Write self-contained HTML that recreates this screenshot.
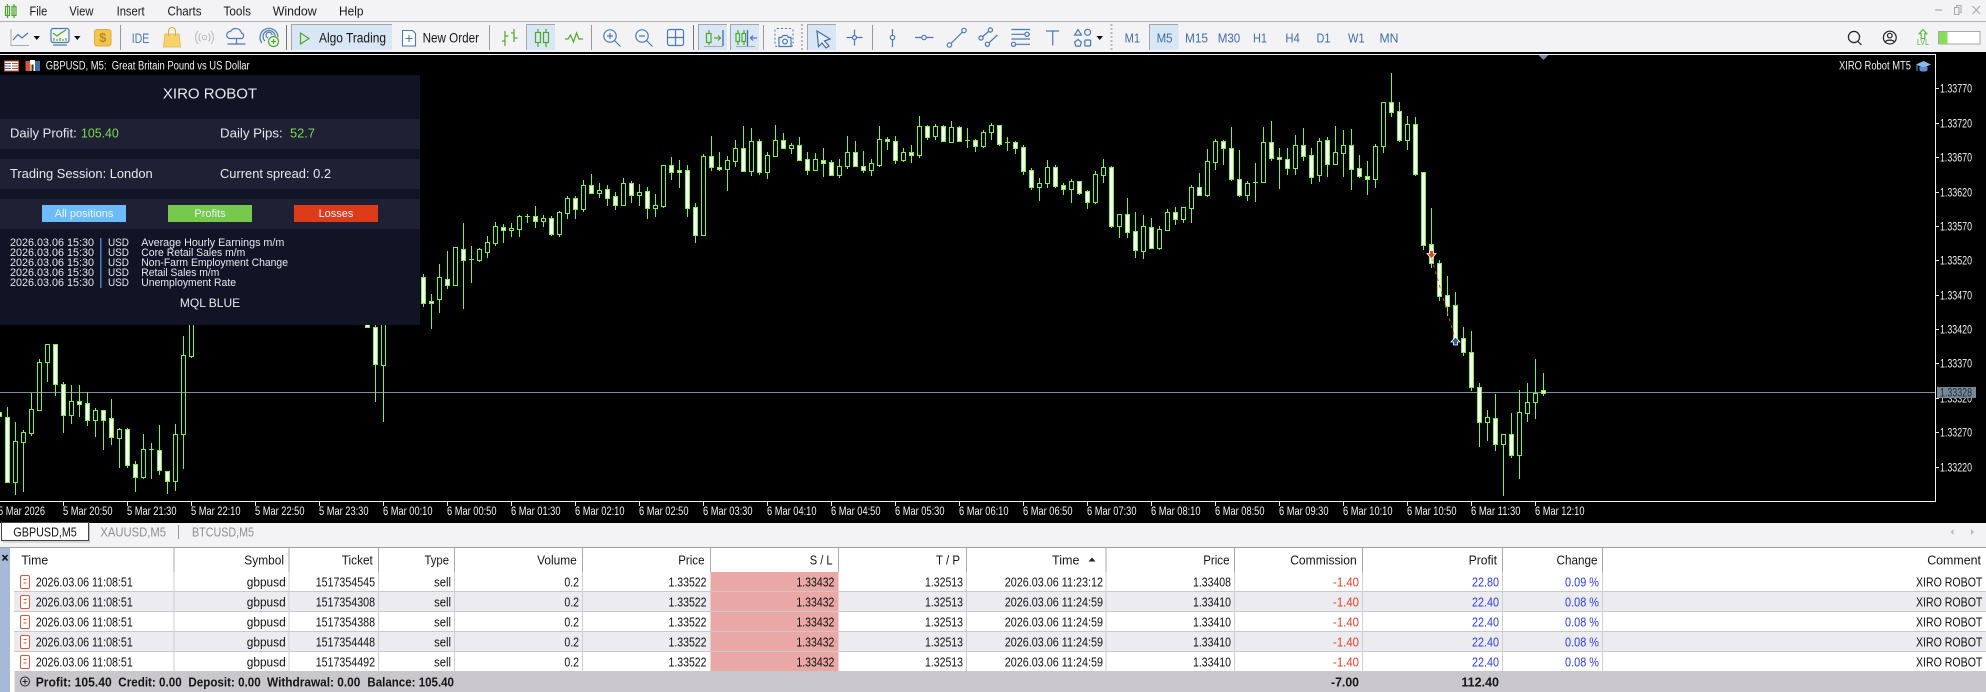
<!DOCTYPE html>
<html><head><meta charset="utf-8"><title>MetaTrader 5</title>
<style>
html,body{margin:0;padding:0;background:#f3f2f5;overflow:hidden}
svg{display:block;font-family:"Liberation Sans",Arial,sans-serif}
.m{font-size:13px;fill:#1a1a1a}
.tf{font-size:13px;fill:#3f6ea6}
.ax{font-size:11.5px;fill:#f2f2f2}
.hd{font-size:13px;fill:#151515;text-anchor:end}
.cell{font-size:13px;fill:#111;text-anchor:end}
.p{font-size:13px;fill:#e6e8f0}
.n{font-size:11px;fill:#e6e8f0}
.btn{font-size:11px;fill:#eef4fa;text-anchor:middle}
.bl{fill:none;stroke:#4a7ab5;stroke-width:1.2}
.gr{fill:none;stroke:#4ea82e;stroke-width:1.2}
</style></head><body>
<svg width="1986" height="692" viewBox="0 0 1986 692" xmlns="http://www.w3.org/2000/svg">
<rect width="1986" height="692" fill="#f3f2f5"/>
<!-- menu -->
<g class="gr"><path d="M7.5 4V18M14 4V18"/><rect x="5.5" y="6.5" width="4" height="9" /><rect x="12" y="6.5" width="4" height="9"/></g>
<text class="m" x="29.5" y="15.5" textLength="17.7" lengthAdjust="spacingAndGlyphs">File</text>
<text class="m" x="69.4" y="15.5" textLength="24" lengthAdjust="spacingAndGlyphs">View</text>
<text class="m" x="116.6" y="15.5" textLength="28" lengthAdjust="spacingAndGlyphs">Insert</text>
<text class="m" x="167.5" y="15.5" textLength="34" lengthAdjust="spacingAndGlyphs">Charts</text>
<text class="m" x="223.5" y="15.5" textLength="27.5" lengthAdjust="spacingAndGlyphs">Tools</text>
<text class="m" x="272.7" y="15.5" textLength="44" lengthAdjust="spacingAndGlyphs">Window</text>
<text class="m" x="339" y="15.5" textLength="24.5" lengthAdjust="spacingAndGlyphs">Help</text>
<rect x="0" y="21" width="1986" height="1" fill="#b0b0b0"/>
<path d="M1935 10h7" stroke="#a8a8a8" stroke-width="1.2"/>
<path d="M1954.5 7.5h4.5v7h-4.5zM1956.5 7.5v-2h4.5v7h-2" fill="none" stroke="#a8a8a8"/>
<path d="M1972.5 6l7.5 8M1980 6l-7.5 8" stroke="#a8a8a8" stroke-width="1.1"/>
<!-- toolbar separators -->
<g fill="#9a9a9a">
<rect x="120" y="25" width="1" height="25"/><rect x="286" y="25" width="1" height="25" fill="#777"/>
<rect x="489" y="25" width="1" height="25"/><rect x="591" y="25" width="1" height="25"/>
<rect x="693" y="25" width="1" height="25" fill="#777"/><rect x="763" y="25" width="1" height="25"/>
<rect x="872" y="25" width="1" height="25"/>
</g>
<path d="M802 24V50M1111.5 24V50" stroke="#b8b8b8" stroke-width="2" stroke-dasharray="2 2"/>
<!-- active buttons -->
<g fill="#d9e6f5" stroke="none">
<rect x="291" y="24" width="101" height="26"/><rect x="526" y="24" width="29" height="26"/>
<rect x="698" y="24" width="29" height="26"/><rect x="730" y="24" width="29" height="26"/>
<rect x="807" y="24" width="29" height="26"/><rect x="1149" y="24" width="29.5" height="26"/>
</g>
<g fill="none" stroke="#a6a6a6">
<path d="M291.5 50V24.5H392"/><path d="M526.5 50V24.5H555"/><path d="M698.5 50V24.5H727"/><path d="M730.5 50V24.5H759"/><path d="M807.5 50V24.5H836"/><path d="M1149.5 50V24.5H1178"/>
</g>
<!-- left group icons -->
<path d="M11 29V45.5H29" fill="none" stroke="#aaa"/><path d="M13 40L18 34.5L22 38L28 33" class="bl"/>
<path d="M33.5 36h6.5l-3.2 4zM74 36h6.5l-3.2 4zM1096.5 36h6.5l-3.2 4z" fill="#111"/>
<rect x="51" y="28.5" width="18" height="14" rx="2" class="bl"/><path d="M53 33l4 3 4-3 5-3" class="gr"/><path d="M54 41v-3M57 41v-2M60 41v-3M63 41v-2M66 41v-3" class="gr"/><path d="M53 45h14" class="bl"/>
<rect x="94.5" y="29.5" width="16.5" height="16.5" rx="2.5" fill="#f3c64f" stroke="#dcaf3c"/><text x="102.7" y="42" font-size="13" font-weight="bold" fill="#b58a22" text-anchor="middle">$</text>
<text x="131.7" y="43" font-size="13.5" fill="#4a7ab5" textLength="17.7" lengthAdjust="spacingAndGlyphs">IDE</text>
<path d="M165 34h14l1.5 13h-17z" fill="#f6d36a" stroke="#e0b648" stroke-width=".8"/><path d="M168.5 36v-5a3.5 3.5 0 0 1 7 0v5" fill="none" stroke="#d9ad3e" stroke-width="1.1"/>
<g fill="none" stroke="#bdbdbd" stroke-width="1.1"><circle cx="204.5" cy="37.5" r="2.2"/><path d="M200.5 33.5a6 6 0 0 0 0 8M208.5 33.5a6 6 0 0 1 0 8M198 31a10 10 0 0 0 0 13M211 31a10 10 0 0 1 0 13"/></g>
<path d="M230 38.5a3.5 3.5 0 0 1 .5-7 6 6 0 0 1 11 1.5 3 3 0 0 1 .5 5.5zM236.5 38.5v5M227.5 44h18" class="bl"/>
<g class="bl"><path d="M262 43a9 9 0 1 1 16-6M265 41a6 6 0 1 1 10-5M268 38a3 3 0 1 1 4-3"/></g>
<circle cx="273.5" cy="41.5" r="5" fill="#f3f2f5" stroke="#4ea82e" stroke-width="1.2"/><path d="M271 41.5h5M273.5 39v5" stroke="#4ea82e" stroke-width="1.2"/>
<path d="M300.5 33l8.5 5.5-8.5 5.5z" fill="none" stroke="#4ea82e" stroke-width="1.2"/>
<text x="319" y="42.5" font-size="13.5" fill="#151515" textLength="67" lengthAdjust="spacingAndGlyphs">Algo Trading</text>
<path d="M402.5 30.5h10l3 3v12.5h-13z" fill="#fff" stroke="#4a7ab5" stroke-width="1.1"/><path d="M409 35v7M405.5 38.5h7" stroke="#4a7ab5" stroke-width="1.1"/>
<text x="422.6" y="42.5" font-size="13.5" fill="#151515" textLength="56.4" lengthAdjust="spacingAndGlyphs">New Order</text>
<path d="M505 31v15M505 41h-3M505 36h3.5M514 29v13M514 33h-3M514 38h3.5" class="gr"/>
<g class="gr"><path d="M538 29v18M546 29v18"/><rect x="535.5" y="32.5" width="5" height="10" fill="#d9e6f5"/><rect x="543.5" y="32.5" width="5" height="10" fill="#d9e6f5"/></g>
<path d="M565 39h3l2.5-4 3 7 3-9 2.5 6h4" class="gr"/>
<g class="bl"><circle cx="610" cy="36" r="6.2"/><path d="M607 36h6M610 33v6M614.5 40.5l6 6"/><circle cx="642" cy="36" r="6.2"/><path d="M639 36h6M646.5 40.5l6 6"/>
<rect x="667.5" y="29.5" width="16" height="16" rx="2"/><path d="M667.5 37.5h16M675.5 29.5v16"/></g>
<g class="gr"><path d="M709 30v15"/><rect x="706.5" y="33.5" width="4.5" height="9" fill="#d9e6f5"/><path d="M714 38h6M718 35.5l2.5 2.5-2.5 2.5"/></g>
<path d="M723 30v16" stroke="#3f6ea6" stroke-width="1.3"/><path d="M704 46.5h19M736 46.5h19" stroke="#aaa"/>
<g class="gr"><path d="M738 30v15M744 30v15"/><rect x="736" y="33.5" width="3.5" height="8" fill="#d9e6f5"/><rect x="742" y="33.5" width="3.5" height="8" fill="#d9e6f5"/></g>
<path d="M747.5 30v16" stroke="#3f6ea6" stroke-width="1.3"/><path d="M751 38h6M753 35.5l-2.5 2.5 2.5 2.5" class="bl"/>
<rect x="775" y="28.5" width="18" height="18" rx="2" fill="none" stroke="#4a7ab5" stroke-dasharray="2 2"/><path d="M779 37.5h2.5l1.5-2h4l1.5 2h2.5v9h-12z" fill="#f3f2f5" stroke="#4a7ab5" stroke-width="1.2"/><circle cx="785" cy="41.5" r="2.4" class="bl"/>
<path d="M817 31l13 8-5.5 2 4.5 5-3 2-4-5-3.5 3.5z" fill="#e8f0f9" stroke="#3f6ea6" stroke-width="1.2"/>
<g class="bl"><path d="M846.5 37.5h16M854.5 29.5v16"/><circle cx="854.5" cy="37.5" r="2" fill="#f3f2f5"/><path d="M892.5 29v18"/><circle cx="892.5" cy="37.5" r="2.2" fill="#f3f2f5"/><path d="M915 37.5h18.5"/><circle cx="924" cy="37.5" r="2.2" fill="#f3f2f5"/>
<path d="M949.5 45L964 30.5"/><circle cx="949.5" cy="45" r="2.2" fill="#f3f2f5"/><circle cx="964" cy="30.5" r="2.2" fill="#f3f2f5"/>
<path d="M981 38l9.4-8M987.4 44.3l10-9.3"/><circle cx="981" cy="38" r="2.1" fill="#f3f2f5"/><circle cx="990.4" cy="30" r="2.1" fill="#f3f2f5"/><circle cx="987.4" cy="44.3" r="2.1" fill="#f3f2f5"/>
<path d="M1011.4 29.5h18.6M1011.4 34.3h18.6M1011.4 39h18.6M1011.4 44.3h18.6"/><circle cx="1027" cy="34.3" r="2.1" fill="#f3f2f5"/><circle cx="1013.5" cy="44.3" r="2.1" fill="#f3f2f5"/>
<path d="M1046 31h13M1052.7 31v14.5"/>
<path d="M1078 29.5l3.4 5.5h-6.8z"/><circle cx="1087.6" cy="32.3" r="3"/><path d="M1078 39.5l3.4 2.6-1.2 4h-4.4l-1.2-4z"/><rect x="1084.8" y="40" width="5.8" height="6" rx="1"/></g>
<!-- timeframes -->
<text class="tf" x="1124.6" y="42.5" textLength="15.4" lengthAdjust="spacingAndGlyphs">M1</text>
<text class="tf" x="1156.6" y="42.5" textLength="16" lengthAdjust="spacingAndGlyphs">M5</text>
<text class="tf" x="1185" y="42.5" textLength="23" lengthAdjust="spacingAndGlyphs">M15</text>
<text class="tf" x="1217.7" y="42.5" textLength="22.5" lengthAdjust="spacingAndGlyphs">M30</text>
<text class="tf" x="1253" y="42.5" textLength="14" lengthAdjust="spacingAndGlyphs">H1</text>
<text class="tf" x="1285.4" y="42.5" textLength="14.4" lengthAdjust="spacingAndGlyphs">H4</text>
<text class="tf" x="1316.5" y="42.5" textLength="14" lengthAdjust="spacingAndGlyphs">D1</text>
<text class="tf" x="1348" y="42.5" textLength="16.6" lengthAdjust="spacingAndGlyphs">W1</text>
<text class="tf" x="1379.5" y="42.5" textLength="19" lengthAdjust="spacingAndGlyphs">MN</text>
<!-- right tools -->
<g fill="none" stroke="#222" stroke-width="1.2"><circle cx="1854" cy="37" r="5.6"/><path d="M1858 41.5l3.5 3.5"/><circle cx="1889.8" cy="37.6" r="6.4"/><circle cx="1889.8" cy="35.6" r="2.3"/><path d="M1885.3 42c1-2.5 8-2.5 9 0"/></g>
<path d="M1923 29.5l3.8 4.2h-2v4.8h-3.6v-4.8h-2z" fill="none" stroke="#58b436" stroke-width="1.1"/>
<text x="1917" y="45" font-size="8.5" fill="#58b436" textLength="12" lengthAdjust="spacingAndGlyphs">LVL</text>
<rect x="1938.5" y="31.5" width="41.5" height="12.5" fill="#fff" stroke="#a8a8a8"/><rect x="1939" y="32" width="8.5" height="12" fill="#88dc5a"/>
<!-- chart -->
<rect x="0" y="52" width="1986" height="471" fill="#000"/>
<path d="M0 54.5H1935.5V501.5H0" fill="none" stroke="#f2f2f2"/>
<path d="M1538.5 55h10l-5 5z" fill="#778899"/>
<!-- chart header icons -->
<rect x="4.5" y="61" width="14" height="10" fill="#fff" stroke="#d04a30"/><path d="M5 63.5h6M5 66h6M5 68.5h6" stroke="#3f6ea6"/><path d="M12 63.5h6M12 66h6M12 68.5h6" stroke="#d04a30"/>
<rect x="25.5" y="61" width="14.5" height="10" fill="#fff"/><rect x="25.5" y="61" width="5" height="10" fill="#d8573a"/><rect x="35" y="61" width="5" height="10" fill="#3f6ea6"/><rect x="30" y="60" width="5" height="4" fill="#fff"/><rect x="31.5" y="64.5" width="2" height="6.5" fill="#333"/>
<text class="ax" x="45.7" y="69.5" textLength="204" lengthAdjust="spacingAndGlyphs">GBPUSD, M5:&#160; Great Britain Pound vs US Dollar</text>
<text class="ax" x="1839" y="69.5" textLength="72" lengthAdjust="spacingAndGlyphs">XIRO Robot MT5</text>
<path d="M1916 64.5l7.5-3.5 7.5 3.5-7.5 3.5z" fill="#8fb8e8"/><path d="M1919.5 67v3.5c2 1.5 6 1.5 8 0V67" fill="#5d8fd0"/><path d="M1917 65v6" stroke="#5d8fd0"/>
<rect x="0" y="392" width="1935" height="1" fill="#7f8fa3"/>
<g id="c"></g>
<path d="M1431.5 258L1455.5 340" stroke="#d8552a" stroke-dasharray="3 4" fill="none"/>
<path d="M1429.5 250.5h4v3h2.5l-4.5 5.5-4.5-5.5h2.5z" fill="#d0502a" stroke="#fff" stroke-width=".8"/>
<path d="M1455.5 337l4.5 5h-2.5v3h-4v-3h-2.5z" fill="#2c5ca8" stroke="#fff" stroke-width=".8"/>
<!-- price axis -->
<g fill="#e8e8e8"><rect x="1936" y="88" width="3" height="1"/><rect x="1936" y="123" width="3" height="1"/><rect x="1936" y="157" width="3" height="1"/><rect x="1936" y="192" width="3" height="1"/><rect x="1936" y="226" width="3" height="1"/><rect x="1936" y="260" width="3" height="1"/><rect x="1936" y="295" width="3" height="1"/><rect x="1936" y="329" width="3" height="1"/><rect x="1936" y="363" width="3" height="1"/><rect x="1936" y="398" width="3" height="1"/><rect x="1936" y="432" width="3" height="1"/><rect x="1936" y="467" width="3" height="1"/></g>
<text class="ax" x="1940" y="92.7" textLength="32" lengthAdjust="spacingAndGlyphs">1.33770</text>
<text class="ax" x="1940" y="127.3" textLength="32" lengthAdjust="spacingAndGlyphs">1.33720</text>
<text class="ax" x="1940" y="161.7" textLength="32" lengthAdjust="spacingAndGlyphs">1.33670</text>
<text class="ax" x="1940" y="196.7" textLength="32" lengthAdjust="spacingAndGlyphs">1.33620</text>
<text class="ax" x="1940" y="230.7" textLength="32" lengthAdjust="spacingAndGlyphs">1.33570</text>
<text class="ax" x="1940" y="264.7" textLength="32" lengthAdjust="spacingAndGlyphs">1.33520</text>
<text class="ax" x="1940" y="299.3" textLength="32" lengthAdjust="spacingAndGlyphs">1.33470</text>
<text class="ax" x="1940" y="333.3" textLength="32" lengthAdjust="spacingAndGlyphs">1.33420</text>
<text class="ax" x="1940" y="367.3" textLength="32" lengthAdjust="spacingAndGlyphs">1.33370</text>
<text class="ax" x="1940" y="402.7" textLength="32" lengthAdjust="spacingAndGlyphs">1.33320</text>
<text class="ax" x="1940" y="436.3" textLength="32" lengthAdjust="spacingAndGlyphs">1.33270</text>
<text class="ax" x="1940" y="471.3" textLength="32" lengthAdjust="spacingAndGlyphs">1.33220</text>
<rect x="1937" y="387" width="39" height="11" fill="#778899"/>
<text x="1940" y="396.5" font-size="11.5" fill="#1d2a38" textLength="32" lengthAdjust="spacingAndGlyphs">1.33328</text>
<!-- time axis -->
<path d="M63.5 502v4M127.5 502v4M191.5 502v4M255.5 502v4M319.5 502v4M383.5 502v4M447.5 502v4M511.5 502v4M575.5 502v4M639.5 502v4M703.5 502v4M767.5 502v4M831.5 502v4M895.5 502v4M959.5 502v4M1023.5 502v4M1087.5 502v4M1151.5 502v4M1215.5 502v4M1279.5 502v4M1343.5 502v4M1407.5 502v4M1471.5 502v4M1535.5 502v4" stroke="#e8e8e8"/>
<text class="ax" x="-2" y="515" textLength="47" lengthAdjust="spacingAndGlyphs">5 Mar 2026</text>
<text class="ax" x="63" y="515" textLength="49.5" lengthAdjust="spacingAndGlyphs">5 Mar 20:50</text>
<text class="ax" x="127" y="515" textLength="49.5" lengthAdjust="spacingAndGlyphs">5 Mar 21:30</text>
<text class="ax" x="191" y="515" textLength="49.5" lengthAdjust="spacingAndGlyphs">5 Mar 22:10</text>
<text class="ax" x="255" y="515" textLength="49.5" lengthAdjust="spacingAndGlyphs">5 Mar 22:50</text>
<text class="ax" x="319" y="515" textLength="49.5" lengthAdjust="spacingAndGlyphs">5 Mar 23:30</text>
<text class="ax" x="383" y="515" textLength="49.5" lengthAdjust="spacingAndGlyphs">6 Mar 00:10</text>
<text class="ax" x="447" y="515" textLength="49.5" lengthAdjust="spacingAndGlyphs">6 Mar 00:50</text>
<text class="ax" x="511" y="515" textLength="49.5" lengthAdjust="spacingAndGlyphs">6 Mar 01:30</text>
<text class="ax" x="575" y="515" textLength="49.5" lengthAdjust="spacingAndGlyphs">6 Mar 02:10</text>
<text class="ax" x="639" y="515" textLength="49.5" lengthAdjust="spacingAndGlyphs">6 Mar 02:50</text>
<text class="ax" x="703" y="515" textLength="49.5" lengthAdjust="spacingAndGlyphs">6 Mar 03:30</text>
<text class="ax" x="767" y="515" textLength="49.5" lengthAdjust="spacingAndGlyphs">6 Mar 04:10</text>
<text class="ax" x="831" y="515" textLength="49.5" lengthAdjust="spacingAndGlyphs">6 Mar 04:50</text>
<text class="ax" x="895" y="515" textLength="49.5" lengthAdjust="spacingAndGlyphs">6 Mar 05:30</text>
<text class="ax" x="959" y="515" textLength="49.5" lengthAdjust="spacingAndGlyphs">6 Mar 06:10</text>
<text class="ax" x="1023" y="515" textLength="49.5" lengthAdjust="spacingAndGlyphs">6 Mar 06:50</text>
<text class="ax" x="1087" y="515" textLength="49.5" lengthAdjust="spacingAndGlyphs">6 Mar 07:30</text>
<text class="ax" x="1151" y="515" textLength="49.5" lengthAdjust="spacingAndGlyphs">6 Mar 08:10</text>
<text class="ax" x="1215" y="515" textLength="49.5" lengthAdjust="spacingAndGlyphs">6 Mar 08:50</text>
<text class="ax" x="1279" y="515" textLength="49.5" lengthAdjust="spacingAndGlyphs">6 Mar 09:30</text>
<text class="ax" x="1343" y="515" textLength="49.5" lengthAdjust="spacingAndGlyphs">6 Mar 10:10</text>
<text class="ax" x="1407" y="515" textLength="49.5" lengthAdjust="spacingAndGlyphs">6 Mar 10:50</text>
<text class="ax" x="1471" y="515" textLength="49.5" lengthAdjust="spacingAndGlyphs">6 Mar 11:30</text>
<text class="ax" x="1535" y="515" textLength="49.5" lengthAdjust="spacingAndGlyphs">6 Mar 12:10</text>
<!-- robot panel -->
<rect x="0" y="75" width="420" height="250" fill="#111424"/>
<rect x="0" y="119" width="420" height="30" fill="#1f2033"/>
<rect x="0" y="159" width="420" height="30" fill="#1f2033"/>
<rect x="0" y="199" width="420" height="30" fill="#1f2033"/>
<text x="210" y="98.5" font-size="15" fill="#e6e8f0" text-anchor="middle">XIRO ROBOT</text>
<text class="p" x="10" y="137.5" textLength="66.7" lengthAdjust="spacingAndGlyphs">Daily Profit:</text><text x="81" y="137.5" font-size="13" fill="#7bd855" textLength="37.7" lengthAdjust="spacingAndGlyphs">105.40</text>
<text class="p" x="220" y="137.5" textLength="62.7" lengthAdjust="spacingAndGlyphs">Daily Pips:</text><text x="290" y="137.5" font-size="13" fill="#7bd855" textLength="25" lengthAdjust="spacingAndGlyphs">52.7</text>
<text class="p" x="10" y="178" textLength="142.7" lengthAdjust="spacingAndGlyphs">Trading Session: London</text>
<text class="p" x="220" y="178" textLength="111" lengthAdjust="spacingAndGlyphs">Current spread: 0.2</text>
<rect x="42" y="205" width="84" height="17" fill="#6bbcf8"/><rect x="168" y="205" width="84" height="17" fill="#76c94d"/><rect x="294" y="205" width="84" height="17" fill="#dd3b1a"/>
<text class="btn" x="84" y="217">All positions</text><text class="btn" x="210" y="217">Profits</text><text class="btn" x="336" y="217">Losses</text>
<rect x="100" y="238" width="1.5" height="50" fill="#4a80c0"/>
<text class="n" x="10" y="246" textLength="84" lengthAdjust="spacingAndGlyphs">2026.03.06 15:30</text><text class="n" x="108" y="246" textLength="21" lengthAdjust="spacingAndGlyphs">USD</text><text class="n" x="141.3" y="246" textLength="143" lengthAdjust="spacingAndGlyphs">Average Hourly Earnings m/m</text>
<text class="n" x="10" y="256" textLength="84" lengthAdjust="spacingAndGlyphs">2026.03.06 15:30</text><text class="n" x="108" y="256" textLength="21" lengthAdjust="spacingAndGlyphs">USD</text><text class="n" x="141.3" y="256" textLength="104" lengthAdjust="spacingAndGlyphs">Core Retail Sales m/m</text>
<text class="n" x="10" y="266" textLength="84" lengthAdjust="spacingAndGlyphs">2026.03.06 15:30</text><text class="n" x="108" y="266" textLength="21" lengthAdjust="spacingAndGlyphs">USD</text><text class="n" x="141.3" y="266" textLength="146.7" lengthAdjust="spacingAndGlyphs">Non-Farm Employment Change</text>
<text class="n" x="10" y="276" textLength="84" lengthAdjust="spacingAndGlyphs">2026.03.06 15:30</text><text class="n" x="108" y="276" textLength="21" lengthAdjust="spacingAndGlyphs">USD</text><text class="n" x="141.3" y="276" textLength="78" lengthAdjust="spacingAndGlyphs">Retail Sales m/m</text>
<text class="n" x="10" y="286" textLength="84" lengthAdjust="spacingAndGlyphs">2026.03.06 15:30</text><text class="n" x="108" y="286" textLength="21" lengthAdjust="spacingAndGlyphs">USD</text><text class="n" x="141.3" y="286" textLength="94.7" lengthAdjust="spacingAndGlyphs">Unemployment Rate</text>
<text x="210" y="307" font-size="12" fill="#e6e8f0" text-anchor="middle">MQL BLUE</text>
<!-- tabs -->
<rect x="0" y="523" width="1986" height="25" fill="#f3f2f5"/>
<rect x="1.5" y="522.5" width="87" height="18" fill="#fff" stroke="#444"/><path d="M89.5 524v18H3" fill="none" stroke="#bbb"/>
<text x="13.4" y="536.5" font-size="13" fill="#151515" textLength="63.4" lengthAdjust="spacingAndGlyphs">GBPUSD,M5</text>
<text x="100.4" y="536.5" font-size="13" fill="#8f8f8f" textLength="65.6" lengthAdjust="spacingAndGlyphs">XAUUSD,M5</text>
<rect x="178" y="525" width="1" height="14" fill="#999"/>
<text x="192" y="536.5" font-size="13" fill="#8f8f8f" textLength="62" lengthAdjust="spacingAndGlyphs">BTCUSD,M5</text>
<path d="M1953.5 529v6l-3-3zM1971 529v6l3-3z" fill="#bbb"/>
<!-- table -->
<rect x="0" y="548" width="1986" height="144" fill="#fff"/>
<rect x="0" y="547" width="1986" height="1" fill="#a0a0a0"/>
<rect x="0" y="548" width="10" height="144" fill="#a7b8d8"/>
<path d="M2.5 555l5 5.5M7.5 555l-5 5.5" stroke="#111" stroke-width="1.5"/>
<rect x="14" y="592" width="1972" height="19" fill="#ecebef"/><rect x="14" y="632" width="1972" height="19" fill="#ecebef"/>
<rect x="710.5" y="572" width="128" height="99" fill="#e9a8a6"/>
<g fill="#c9c9cc"><rect x="14" y="591" width="1972" height="1"/><rect x="14" y="611" width="1972" height="1"/><rect x="14" y="631" width="1972" height="1"/><rect x="14" y="651" width="1972" height="1"/></g>
<path d="M174 572V671M289 572V671M378.5 572V671M454.5 572V671M582.5 572V671M966.5 572V671M1106 572V671M1234.5 572V671M1362.5 572V671M1502.5 572V671M1602.5 572V671" stroke="#cfcfd2"/>
<path d="M174 548V572M289 548V572M378.5 548V572M454.5 548V572M582.5 548V572M710.5 548V572M838.5 548V572M966.5 548V572M1106 548V572M1234.5 548V572M1362.5 548V572M1502.5 548V572M1602.5 548V572" stroke="#a8a8a8"/>
<text class="hd" x="21.4" y="564.5" style="text-anchor:start" textLength="26.8" lengthAdjust="spacingAndGlyphs">Time</text>
<text class="hd" x="284" y="564.5" textLength="39.7" lengthAdjust="spacingAndGlyphs">Symbol</text>
<text class="hd" x="372.8" y="564.5" textLength="31" lengthAdjust="spacingAndGlyphs">Ticket</text>
<text class="hd" x="449" y="564.5" textLength="24.5" lengthAdjust="spacingAndGlyphs">Type</text>
<text class="hd" x="576.8" y="564.5" textLength="39.7" lengthAdjust="spacingAndGlyphs">Volume</text>
<text class="hd" x="704.5" y="564.5" textLength="26.3" lengthAdjust="spacingAndGlyphs">Price</text>
<text class="hd" x="832.6" y="564.5" textLength="22.8" lengthAdjust="spacingAndGlyphs">S / L</text>
<text class="hd" x="960" y="564.5" textLength="24" lengthAdjust="spacingAndGlyphs">T / P</text>
<text class="hd" x="1079.5" y="564.5" textLength="27.5" lengthAdjust="spacingAndGlyphs">Time</text>
<path d="M1088.5 561.5l3.5-4 3.5 4z" fill="#222"/>
<text class="hd" x="1229.5" y="564.5" textLength="26.3" lengthAdjust="spacingAndGlyphs">Price</text>
<text class="hd" x="1356.7" y="564.5" textLength="66.5" lengthAdjust="spacingAndGlyphs">Commission</text>
<text class="hd" x="1497" y="564.5" textLength="28.4" lengthAdjust="spacingAndGlyphs">Profit</text>
<text class="hd" x="1597.5" y="564.5" textLength="41" lengthAdjust="spacingAndGlyphs">Change</text>
<text class="hd" x="1981" y="564.5" textLength="53.8" lengthAdjust="spacingAndGlyphs">Comment</text>
<!-- doc icons -->
<g fill="#fff" stroke="#d9583c"><rect x="20.5" y="575.5" width="9" height="13" rx="1.5"/><rect x="20.5" y="595.5" width="9" height="13" rx="1.5"/><rect x="20.5" y="615.5" width="9" height="13" rx="1.5"/><rect x="20.5" y="635.5" width="9" height="13" rx="1.5"/><rect x="20.5" y="655.5" width="9" height="13" rx="1.5"/></g>
<path d="M23.5 579.5h3M23.5 583h3M23.5 599.5h3M23.5 603h3M23.5 619.5h3M23.5 623h3M23.5 639.5h3M23.5 643h3M23.5 659.5h3M23.5 663h3" stroke="#d9583c"/>
<g class="cell" style="text-anchor:start" transform="matrix(.822 0 0 1 35.7 0)"><text y="586.5">2026.03.06 11:08:51</text><text y="606.5">2026.03.06 11:08:51</text><text y="626.5">2026.03.06 11:08:51</text><text y="646.5">2026.03.06 11:08:51</text><text y="666.5">2026.03.06 11:08:51</text></g>
<g class="cell" transform="matrix(.914 0 0 1 285.7 0)"><text y="586.5">gbpusd</text><text y="606.5">gbpusd</text><text y="626.5">gbpusd</text><text y="646.5">gbpusd</text><text y="666.5">gbpusd</text></g>
<g class="cell" transform="matrix(.822 0 0 1 375 0)"><text y="586.5">1517354545</text><text y="606.5">1517354308</text><text y="626.5">1517354388</text><text y="646.5">1517354448</text><text y="666.5">1517354492</text></g>
<g class="cell" transform="matrix(.868 0 0 1 451 0)"><text y="586.5">sell</text><text y="606.5">sell</text><text y="626.5">sell</text><text y="646.5">sell</text><text y="666.5">sell</text></g>
<g class="cell" transform="matrix(.812 0 0 1 579 0)"><text y="586.5">0.2</text><text y="606.5">0.2</text><text y="626.5">0.2</text><text y="646.5">0.2</text><text y="666.5">0.2</text></g>
<g class="cell" transform="matrix(.809 0 0 1 706.5 0)"><text y="586.5">1.33522</text><text y="606.5">1.33522</text><text y="626.5">1.33522</text><text y="646.5">1.33522</text><text y="666.5">1.33522</text></g>
<g class="cell" transform="matrix(.809 0 0 1 834.4 0)"><text y="586.5">1.33432</text><text y="606.5">1.33432</text><text y="626.5">1.33432</text><text y="646.5">1.33432</text><text y="666.5">1.33432</text></g>
<g class="cell" transform="matrix(.809 0 0 1 963 0)"><text y="586.5">1.32513</text><text y="606.5">1.32513</text><text y="626.5">1.32513</text><text y="646.5">1.32513</text><text y="666.5">1.32513</text></g>
<g class="cell" transform="matrix(.831 0 0 1 1103 0)"><text y="586.5">2026.03.06 11:23:12</text><text y="606.5">2026.03.06 11:24:59</text><text y="626.5">2026.03.06 11:24:59</text><text y="646.5">2026.03.06 11:24:59</text><text y="666.5">2026.03.06 11:24:59</text></g>
<g class="cell" transform="matrix(.809 0 0 1 1231 0)"><text y="586.5">1.33408</text><text y="606.5">1.33410</text><text y="626.5">1.33410</text><text y="646.5">1.33410</text><text y="666.5">1.33410</text></g>
<g class="cell" style="fill:#e2402a" transform="matrix(.877 0 0 1 1359 0)"><text y="586.5">-1.40</text><text y="606.5">-1.40</text><text y="626.5">-1.40</text><text y="646.5">-1.40</text><text y="666.5">-1.40</text></g>
<g class="cell" style="fill:#2b3de0" transform="matrix(.831 0 0 1 1499 0)"><text y="586.5">22.80</text><text y="606.5">22.40</text><text y="626.5">22.40</text><text y="646.5">22.40</text><text y="666.5">22.40</text></g>
<g class="cell" style="fill:#2b3de0" transform="matrix(.84 0 0 1 1599 0)"><text y="586.5">0.09 %</text><text y="606.5">0.08 %</text><text y="626.5">0.08 %</text><text y="646.5">0.08 %</text><text y="666.5">0.08 %</text></g>
<g class="cell" transform="matrix(.815 0 0 1 1982.4 0)"><text y="586.5">XIRO ROBOT</text><text y="606.5">XIRO ROBOT</text><text y="626.5">XIRO ROBOT</text><text y="646.5">XIRO ROBOT</text><text y="666.5">XIRO ROBOT</text></g>
<!-- summary -->
<rect x="14.5" y="671" width="1971.5" height="21" fill="#c9c7cb"/>
<circle cx="25" cy="681.5" r="4.5" fill="none" stroke="#222"/><path d="M22.5 681.5h5M25 679v5" stroke="#222"/>
<g font-size="13" font-weight="bold" fill="#151515">
<text x="35.7" y="686.5" textLength="76" lengthAdjust="spacingAndGlyphs">Profit: 105.40</text>
<text x="118.3" y="686.5" textLength="63.4" lengthAdjust="spacingAndGlyphs">Credit: 0.00</text>
<text x="188.4" y="686.5" textLength="72.3" lengthAdjust="spacingAndGlyphs">Deposit: 0.00</text>
<text x="267" y="686.5" textLength="93.3" lengthAdjust="spacingAndGlyphs">Withdrawal: 0.00</text>
<text x="367.4" y="686.5" textLength="86.6" lengthAdjust="spacingAndGlyphs">Balance: 105.40</text>
<text x="1359" y="686.5" text-anchor="end" textLength="28" lengthAdjust="spacingAndGlyphs">-7.00</text>
<text x="1499" y="686.5" text-anchor="end" textLength="37.6" lengthAdjust="spacingAndGlyphs">112.40</text>
</g>
</svg>
<script>
// candles: [high, bodyTop, bodyBottom, low, filled]
var A=[[411,412,416,417,1],[407,417,482,483,1],[422,441,482,495,0],[430,432,442,492,0],[393,409,433,436,0],[359,362,410,411,0],[344,344,362,382,0],[344,344,384,396,1],[382,384,415,433,1],[385,401,415,424,0],[385,401,404,417,1],[392,403,420,426,1],[408,410,420,437,0],[410,410,420,450,1],[399,418,437,445,1],[428,429,438,468,0],[428,429,465,468,1],[461,464,477,492,1],[434,449,477,479,0],[443,449,449,479,1],[425,450,470,475,1],[471,471,481,494,1],[424,434,481,491,0],[336,355,434,469,0],[300,300,356,358,0]];
var Hid={45:[300,300,327,327,1],46:[300,327,364,402,1],47:[300,300,365,422,0]};
// zoomed units: real y = 100 + v/3  (k = 52..)
var B=[[522,532,608,620,1],[582,603,608,687,1],[492,532,596,638,0],[453,538,556,566,1],[441,441,554,554,0],[370,448,479,627,1],[438,478,478,548,1],[445,448,479,486,0],[408,427,455,474,0],[366,379,428,437,0],[373,380,389,429,1],[370,385,391,411,0],[346,349,386,411,0],[342,349,349,369,1],[319,349,362,384,1],[346,355,362,380,0],[349,355,401,407,1],[334,337,401,410,0],[289,295,338,357,0],[289,295,326,356,1],[240,256,326,335,0],[222,256,278,278,1],[250,269,278,294,0],[256,268,293,318,1],[277,289,314,330,1],[235,250,314,317,0],[244,250,284,309,1],[252,277,284,318,0],[262,274,323,357,1],[282,316,323,351,0],[196,196,317,324,0],[171,196,215,240,1],[180,211,215,264,1],[195,211,323,351,1],[309,322,404,429,1],[163,169,404,404,0],[109,169,200,213,1],[156,202,206,213,1],[168,181,206,273,0],[121,145,182,202,0],[79,145,212,216,1],[84,124,212,228,0],[118,124,215,225,1],[157,166,215,237,0],[75,121,167,171,0],[99,121,143,144,1],[130,136,143,163,0],[112,136,179,180,1],[156,178,209,225,1],[160,178,209,209,0],[145,181,188,231,1],[181,187,225,228,1],[178,199,224,234,0],[109,157,197,207,0],[124,157,197,201,1],[154,199,209,219,1],[178,190,209,228,0],[79,118,194,201,0],[112,118,124,150,1],[109,124,179,192,1],[145,157,179,186,0],[136,157,164,189,1],[49,79,164,174,0],[75,79,110,120,1],[72,79,107,120,0],[76,79,122,123,1],[64,82,125,125,0],[79,82,122,123,1],[84,121,121,144,1],[118,121,137,156,1],[91,97,137,144,0],[70,76,97,120,0],[76,76,131,138,1],[112,127,127,153,1],[124,127,143,162,1],
[136,142,212,225,1],[205,211,260,270,1],[235,250,260,303,0],[181,202,250,264,0],[195,202,257,264,1],[250,256,266,285,1],[238,244,266,309,0],[244,244,278,285,1],[270,274,305,327,1],[213,223,305,312,0],[178,202,224,249,0],[199,202,377,384,1],[343,343,377,414,0],[294,343,395,414,1],[336,394,449,474,1],[346,379,452,477,0],[354,382,443,447,1],[378,388,443,450,0],[327,337,390,393,0],[321,337,356,375,1],[322,322,356,369,0],[255,262,323,369,0],[220,262,284,284,1],[148,184,284,291,0],[118,124,185,210,0],[121,124,143,195,1],[82,145,236,243,1],[151,238,284,291,1],[244,250,284,303,0],[190,245,245,306,1],[82,127,245,245,0],[64,127,173,183,1],[145,172,178,267,1],[145,178,203,225,1],[106,136,203,225,0],[85,136,167,183,1],[145,166,230,252,1],[115,124,224,246,0],[112,121,191,231,1],[79,157,191,191,0],[91,136,158,231,0],[88,136,206,270,1],[166,205,227,234,1],[184,227,236,285,1],[133,139,236,264,0]];
// real y (k = 172..)
var C=[[102,102,146,153,0],[73,102,112,117,1],[102,111,140,142,1],[116,124,140,150,0],[117,124,174,176,1],[172,172,245,250,1],[208,244,263,268,1],[260,263,296,301,1],[276,295,306,316,1],[292,305,340,345,1],[327,338,352,356,1],[331,352,387,391,1],[383,387,422,447,1],[410,417,422,441,0],[394,418,444,451,1],[434,434,444,496,0],[413,434,455,458,1],[390,412,455,479,0],[383,402,413,422,0],[359,393,402,419,0],[373,390,393,396,1]];
var G="#7ff041",w="",f="",s="",d="";
function draw(k,c){var x=7+8*k,h=Math.round(c[0]),t=Math.round(c[1]),b=Math.round(c[2]),l=Math.round(c[3]);
 if(h<t)w+="M"+(x+.5)+" "+h+"V"+t;
 if(l>b)w+="M"+(x+.5)+" "+b+"V"+l;
 if(b-t<1){d+="M"+(x-2)+" "+(t+.5)+"h5";return}
 var r="M"+(x-1.5)+" "+(t+.5)+"h4v"+(b-t)+"h-4z";
 if(c[4])f+=r;else s+=r;}
A.forEach(function(c,i){draw(i-1,c)});
for(var k in Hid)draw(+k,Hid[k]);
B.forEach(function(c,i){draw(52+i,c.slice(0,4).map(function(v){return 100+v/3}).concat(c[4]))});
C.forEach(function(c,i){draw(172+i,c)});
document.getElementById("c").innerHTML='<path d="'+w+d+'" stroke="'+G+'" fill="none"/><path d="'+f+'" stroke="'+G+'" fill="#fff"/><path d="'+s+'" stroke="'+G+'" fill="none"/>';
</script>
</body></html>
